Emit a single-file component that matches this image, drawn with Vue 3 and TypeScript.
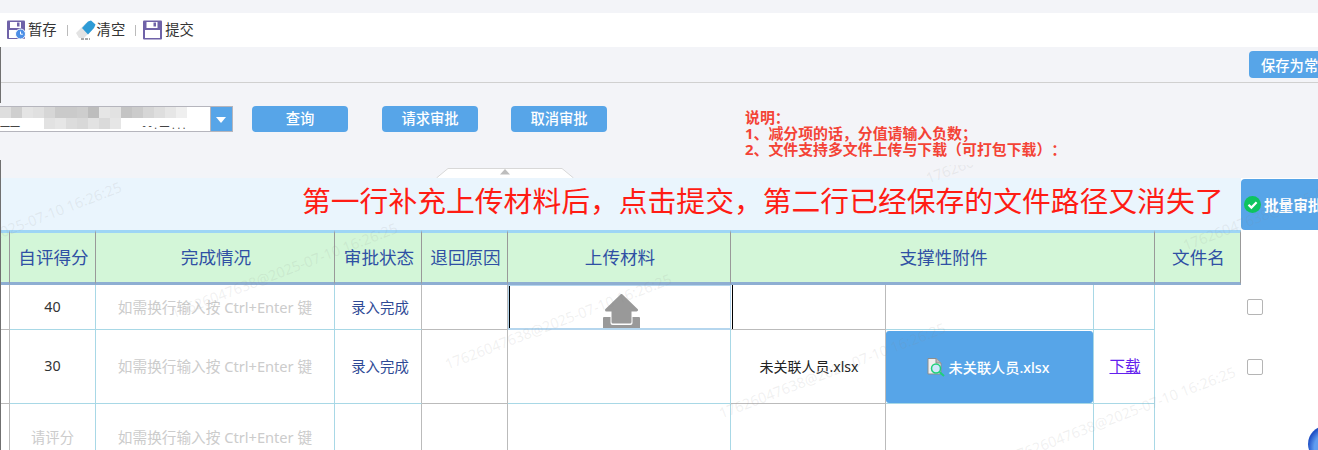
<script setup lang="ts">
const mosaicTop = ['#dedede','#cfcfcf','#e4e4e4','#e0e0e0','#d6d6d6','#cacaca','#cacaca','#cdcdcd','#bdbdbd','#e6e6e6','#e2e2e2','#c4c4c4','#cbcbcb','#d6d6d6','#dedede','#e6e6e6','#efefef']
const mosaicBottom = ['transparent','transparent','transparent','transparent','#e2e2e2','#e6e6e6','#dcdcdc','#d8d8d8','#e2e2e2','#dadada','#e6e6e6','transparent','transparent','transparent','transparent','transparent','transparent']
const tiles = [...mosaicTop, ...mosaicBottom]
const layerTop = 165
const watermarks = [
  { x: 8, y: 229 }, { x: 284, y: 270 }, { x: 558, y: 321 }, { x: 832, y: 370 },
  { x: 1122, y: 414 }, { x: 1296, y: 202 }, { x: 1039, y: 135 }
]
const hint = '如需换行输入按 Ctrl+Enter 键'
const fileName = '未关联人员.xlsx'
</script>

<template>
  <div class="page">
    <div class="toolbar">
      <button class="tool">
        <svg width="19" height="20" viewBox="0 0 19 20">
          <rect x="0" y="0.5" width="18" height="18.5" rx="1" fill="#6f62a8" />
          <rect x="3" y="2" width="11" height="6" fill="#fff" />
          <rect x="10" y="2.5" width="2.5" height="4" fill="#6f62a8" />
          <rect x="2" y="10" width="14" height="8" fill="#fff" />
          <circle cx="13.5" cy="14" r="5" fill="#4d8fe6" stroke="#fff" />
          <path d="M13.5 11.5v2.7h2.3" fill="none" stroke="#fff" />
        </svg>
        <span>暂存</span>
      </button>
      <i class="sep"></i>
      <button class="tool eraser">
        <svg width="21" height="20" viewBox="0 0 21 20">
          <path d="M1 13 11 3 16 1 20 5 18 9 9 18 4 18Z" fill="#e3e3e3" />
          <path d="M7 8 13 1.5 16 0.5 20.5 4.5 19 8 13 14.5Z" fill="#2e9bd6" />
          <path d="M6 19h9" stroke="#555" stroke-dasharray="3 1" />
        </svg>
        <span>清空</span>
      </button>
      <i class="sep"></i>
      <button class="tool submit">
        <svg width="19" height="20" viewBox="0 0 19 20">
          <rect x="0" y="0.5" width="19" height="19" rx="1" fill="#6f62a8" />
          <rect x="3.5" y="2" width="11" height="6" fill="#fff" />
          <rect x="10.5" y="2.5" width="2.5" height="4" fill="#6f62a8" />
          <rect x="2" y="10" width="15" height="8" fill="#fff" />
        </svg>
        <span>提交</span>
      </button>
    </div>

    <div class="savebar">
      <button class="save">保存为常用</button>
    </div>

    <div class="filter">
      <div class="filter-row">
        <div class="select">
          <span class="select-text">——　　　　　　　　　　　　 - - . — . . .</span>
          <div class="mosaic">
            <i v-for="(c, n) in tiles" :key="n" :style="{ background: c }"></i>
          </div>
          <span class="select-arrow"></span>
        </div>
        <button class="action first">查询</button>
        <button class="action">请求审批</button>
        <button class="action third">取消审批</button>
        <div class="note">
          <div>说明：</div>
          <div>1、减分项的话，分值请输入负数；</div>
          <div>2、文件支持多文件上传与下载（可打包下载）：</div>
        </div>
      </div>
      <svg class="collapse" width="138" height="10" viewBox="0 0 138 10">
        <path d="M0.5 10 12 0.5H126L137.5 10" fill="#fff" stroke="#d8d8d8" />
        <path d="M64 6.5 69 1 74 6.5Z" fill="#bdbdbd" />
      </svg>
    </div>

    <div class="banner-row">
      <div class="banner">第一行补充上传材料后，点击提交，第二行已经保存的文件路径又消失了</div>
      <button class="batch">
        <svg width="17" height="17" viewBox="0 0 17 17">
          <circle cx="8.5" cy="8.5" r="8.5" fill="#0ec45f" />
          <path d="M4.5 8.7 7.4 11.6 12.6 6.2" fill="none" stroke="#fff" stroke-width="2.2" />
        </svg>
        <span>批量审批</span>
      </button>
    </div>

    <table class="grid">
      <colgroup>
        <col class="c1" /><col class="c2" /><col class="c3" /><col class="c4" /><col class="c5" />
        <col class="c6" /><col class="c7" /><col class="c8" /><col class="c9" /><col class="c10" /><col class="c11" />
      </colgroup>
      <thead>
        <tr>
          <th></th>
          <th>自评得分</th>
          <th>完成情况</th>
          <th>审批状态</th>
          <th>退回原因</th>
          <th>上传材料</th>
          <th colspan="3">支撑性附件</th>
          <th>文件名</th>
          <th class="blank"></th>
        </tr>
      </thead>
      <tbody>
        <tr class="r1">
          <td class="vg hg"></td>
          <td class="vb hb num">40</td>
          <td class="vb hb hint">{{ hint }}</td>
          <td class="vg hb status">录入完成</td>
          <td class="vg hg"></td>
          <td class="vb upload">
            <svg width="37" height="37" viewBox="0 0 37 37">
              <rect x="0" y="23" width="37" height="14" rx="1" fill="#999" />
              <rect x="7.5" y="21" width="22" height="10" rx="2" fill="#fff" />
              <path d="M18.5 1.5 33.5 16H27V28H10V16H3.5Z" fill="#999" stroke="#999" stroke-width="3" stroke-linejoin="round" />
            </svg>
          </td>
          <td class="vg hg after-upload"></td>
          <td class="vb hb"></td>
          <td class="vb hb"></td>
          <td rowspan="3" class="filename"></td>
          <td class="check"><input type="checkbox" aria-label="选择第一行" /></td>
        </tr>
        <tr class="r2">
          <td class="vg hg"></td>
          <td class="vb hb num">30</td>
          <td class="vb hb hint">{{ hint }}</td>
          <td class="vg hb status">录入完成</td>
          <td class="vg hg"></td>
          <td class="vb hb"></td>
          <td class="vg hg name">{{ fileName }}</td>
          <td class="vb hb file-cell">
            <div class="file">
              <svg width="19" height="19" viewBox="0 0 19 19">
                <path d="M1 0.5H9L14 5V16H1Z" fill="#eee" stroke="#8d8d8d" />
                <path d="M9 0.5V5H14" fill="#bbb" stroke="#8d8d8d" />
                <circle cx="9" cy="10.5" r="4.5" fill="#cfe8fb" stroke="#1fd07a" stroke-width="1.5" />
                <path d="M12.5 14 17 18" stroke="#1fd07a" stroke-width="2" />
              </svg>
              <span>{{ fileName }}</span>
            </div>
          </td>
          <td class="vb hb link-cell"><a href="#" @click.prevent>下载</a></td>
          <td class="check"><input type="checkbox" aria-label="选择第二行" /></td>
        </tr>
        <tr class="r3">
          <td class="vg"></td>
          <td class="vb num muted">请评分</td>
          <td class="vb hint">{{ hint }}</td>
          <td class="vg"></td>
          <td class="vg"></td>
          <td class="vb"></td>
          <td class="vg"></td>
          <td class="vb"></td>
          <td class="vb"></td>
          <td></td>
        </tr>
      </tbody>
    </table>

    <i class="edge edge-top"></i>
    <i class="edge edge-bottom"></i>
    <i class="orb"></i>
    <div class="marks">
      <span
        v-for="(w, n) in watermarks"
        :key="n"
        class="watermark"
        :style="{ left: w.x + 'px', top: w.y - layerTop + 'px' }"
      >17626047638@2025-07-10 16:26:25</span>
    </div>
  </div>
</template>

<style>
html, body { margin: 0; background: #fff; }
</style>

<style scoped>
.page {
  position: relative;
  width: 1318px;
  height: 450px;
  overflow: hidden;
  padding-top: 13px;
  box-sizing: border-box;
  background: #f3f4f8;
  font-family: "Noto Sans", "Noto Sans CJK SC", sans-serif;
  font-size: 14.3px;
  color: #333;
  text-spacing-trim: space-all;
}
button {
  border: 0;
  padding: 0;
  font: inherit;
  cursor: pointer;
}
.toolbar {
  height: 34px;
  background: #fff;
  display: flex;
  align-items: center;
  padding-left: 7px;
}
.tool {
  display: flex;
  align-items: center;
  gap: 2px;
  background: none;
  color: #333;
  height: 34px;
}
.tool svg { display: block; margin-top: -1px; }
.tool span { margin-top: -3px; }
.tool.eraser { gap: 1px; }
.tool.submit { gap: 3px; }
.sep {
  width: 1px;
  height: 11px;
  background: #bbb;
  margin: 0 7px 0 10px;
}
.savebar {
  height: 36px;
  box-sizing: border-box;
  border-bottom: 1px solid #d0d0d0;
  padding: 4px 0 0 1249px;
  overflow: hidden;
  white-space: nowrap;
}
.save {
  width: 110px;
  height: 27px;
  border-radius: 4px;
  background: #57a5e8;
  color: #fff;
  text-align: left;
  padding-left: 12px;
  font-weight: 500;
}
.filter { height: 95px; }
.filter-row {
  height: 85px;
  box-sizing: border-box;
  padding-top: 23px;
  display: flex;
  align-items: flex-start;
}
.select {
  position: relative;
  width: 233px;
  height: 26px;
  box-sizing: border-box;
  background: #fff;
  border: 1px solid #b5b5bd;
  border-left: 0;
  flex: none;
}
.select-text {
  position: absolute;
  left: 0;
  bottom: 0;
  font-size: 10px;
  line-height: 12px;
  color: #444;
  white-space: pre;
}
.mosaic {
  position: absolute;
  left: 0;
  top: 0;
  width: 187px;
  display: grid;
  grid-template-columns: repeat(17, 11px);
  grid-auto-rows: 11px;
}
.select-arrow {
  position: absolute;
  right: 0;
  top: 0;
  width: 21px;
  height: 24px;
  background: #57a5e8;
  border-left: 1px solid #b5b5bd;
}
.select-arrow::after {
  content: "";
  position: absolute;
  left: 5px;
  top: 10px;
  border: 5px solid transparent;
  border-top: 6px solid #fff;
  border-bottom: 0;
}
.action {
  flex: none;
  width: 96px;
  height: 26px;
  border-radius: 4px;
  background: #57a5e8;
  color: #fff;
  font-weight: 500;
  line-height: 26px;
  margin-left: 34px;
}
.action.first { margin-left: 19px; }
.action.third { margin-left: 33px; }
.note {
  margin: 3px 0 0 138px;
  color: #f44336;
  font-size: 14.9px;
  line-height: 16px;
  font-weight: 700;
  white-space: nowrap;
}
.collapse {
  display: block;
  margin-left: 436px;
}
.banner-row {
  display: flex;
  height: 52px;
  background: #fff;
}
.banner {
  width: 1241px;
  box-sizing: border-box;
  padding: 5px 0 0 302px;
  background: #eaf5fd;
  color: #ff1c14;
  font-size: 28.8px;
  line-height: 36px;
  white-space: nowrap;
  overflow: hidden;
}
.batch {
  flex: none;
  width: 77px;
  height: 51px;
  margin-top: 1px;
  display: flex;
  align-items: center;
  gap: 3px;
  padding-left: 3px;
  overflow: hidden;
  white-space: nowrap;
  background: #57a5e8;
  border-radius: 4px 0 0 4px;
  color: #fff;
  font-size: 14.6px;
  font-weight: 700;
}
.batch svg { flex: none; }
.grid {
  table-layout: fixed;
  width: 1318px;
  border-collapse: separate;
  border-spacing: 0;
  background: #fff;
}
.c1 { width: 10px; }
.c2 { width: 86px; }
.c3 { width: 239px; }
.c4 { width: 87px; }
.c5 { width: 86px; }
.c6 { width: 223px; }
.c7 { width: 155px; }
.c8 { width: 208px; }
.c9 { width: 61px; }
.c10 { width: 86px; }
.c11 { width: 77px; }
th, td {
  box-sizing: border-box;
  padding: 0 0 2px;
  text-align: center;
  vertical-align: middle;
  white-space: nowrap;
  overflow: hidden;
}
th {
  height: 55px;
  padding-left: 2px;
  background: #d3f6d8;
  border-top: 3px solid #9ed5f5;
  border-bottom: 3px solid #8eaed2;
  border-right: 1px solid #999;
  color: #2f50a4;
  font-size: 17.6px;
  font-weight: 400;
}
th.blank {
  background: #fff;
  border: 0;
}
.r1 td { height: 45px; }
.r2 td { height: 74px; }
.r3 td { height: 66px; }
.vg { border-right: 1px solid #bbb; }
.vb { border-right: 1px solid #a8d8e6; }
.hg { border-bottom: 1px solid #bbb; }
.hb { border-bottom: 1px solid #a8d8e6; }
.num { color: #333; }
.muted { color: #ccc; }
.hint { color: #ccc; font-size: 14.65px; }
td.status { color: #2f4a96; font-size: 14.4px; padding-left: 4px; }
td.name { color: #222; font-size: 14px; padding-left: 2px; }
td.upload {
  border-top: 1px solid #b5d6ee;
  border-bottom: 2px solid #b5d6ee;
  box-shadow: inset 1px 0 0 #b5d6ee, inset 2px 0 0 #000;
  border-right-color: #b5d6ee;
  padding: 0;
}
.upload svg { display: block; margin: 6px 0 -5px 95px; }
.after-upload { box-shadow: inset 1px 0 0 #fff, inset 2px 0 0 #000; }
td.file-cell { padding: 1px 0 0 0; }
.file {
  height: 72px;
  box-sizing: border-box;
  padding-right: 3px;
  border-radius: 3px;
  background: #57a5e8;
  color: #fff;
  font-size: 14.2px;
  font-weight: 500;
  display: flex;
  align-items: center;
  justify-content: center;
  gap: 3px;
}
.file svg { flex: none; }
td.link-cell { padding-left: 2px; }
.link-cell a {
  color: #6320ee;
  font-size: 15.5px;
  text-decoration: underline;
}
td.check { text-align: left; padding: 0 0 0 6px; }
.r1 .check input { margin-top: -2px; }
.check input {
  appearance: none;
  display: block;
  margin: 0;
  width: 16px;
  height: 16px;
  box-sizing: border-box;
  background: #fff;
  border: 1px solid #b5b5b5;
  border-radius: 2px;
}
.edge {
  position: absolute;
  left: 0;
  width: 1px;
  background: #707070;
}
.edge-top { top: 47px; height: 56px; }
.edge-bottom { top: 160px; bottom: 0; }
.orb {
  position: absolute;
  left: 1308px;
  top: 426px;
  width: 36px;
  height: 36px;
  border-radius: 50%;
  background: radial-gradient(circle at 60% 60%, #5f9df0 0 50%, #1f4fc4 72%, #2a66d6 100%);
}
.marks {
  position: absolute;
  left: 0;
  right: 0;
  top: 165px;
  bottom: 0;
  overflow: hidden;
  pointer-events: none;
}
.watermark {
  position: absolute;
  transform: translate(-50%, -50%) rotate(-21deg);
  color: rgba(140, 140, 140, 0.13);
  font-size: 14.5px;
  white-space: nowrap;
}
</style>
